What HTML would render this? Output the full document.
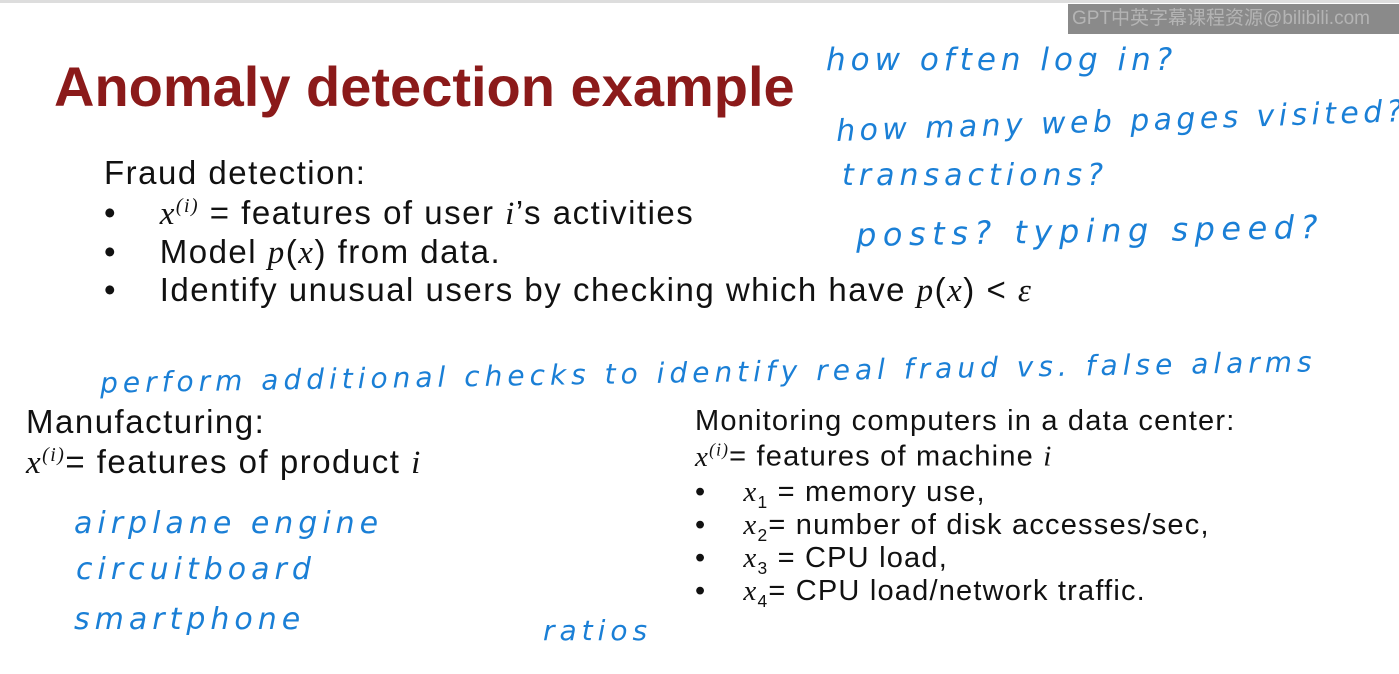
<!DOCTYPE html>
<html><head><meta charset="utf-8"><style>
body{margin:0;width:1399px;height:674px;background:#fff;overflow:hidden;position:relative;font-family:"Liberation Sans",sans-serif;color:#111}
.a{position:absolute;white-space:nowrap}
.t{font-size:33px;letter-spacing:1.5px}
.s{font-size:29px;letter-spacing:1.2px}
.h{color:#1a7fd6;font-family:"DejaVu Sans",sans-serif;font-style:italic;letter-spacing:5px}
i{font-family:"Liberation Serif",serif}
sup,sub{font-size:60%}
</style></head><body>
<div class="a" style="left:0;top:0;width:1399px;height:3px;background:#ddd"></div>
<div class="a" style="left:1068px;top:4px;width:331px;height:30px;background:#8a8a8a;color:#b4b4b4;font-size:19px;line-height:30px;padding-left:4px;font-family:'Liberation Sans','Noto Sans CJK SC',sans-serif">GPT中英字幕课程资源@bilibili.com</div>
<div class="a" style="left:54px;top:54px;font-size:56px;font-weight:bold;color:#8b1a1a">Anomaly detection example</div>
<div class="a t" style="left:104px;top:154px">Fraud detection:</div>
<div class="a t" style="left:104px;top:194px">•&nbsp;&nbsp;&nbsp;&nbsp;<i>x<sup>(i)</sup></i> = features of user <i>i</i>’s activities</div>
<div class="a t" style="left:104px;top:233px">•&nbsp;&nbsp;&nbsp;&nbsp;Model <i>p</i>(<i>x</i>) from data.</div>
<div class="a t" style="left:104px;top:271px">•&nbsp;&nbsp;&nbsp;&nbsp;Identify unusual users by checking which have <i>p</i>(<i>x</i>) &lt; <i>ε</i></div>
<div class="a t" style="left:26px;top:403px">Manufacturing:</div>
<div class="a t" style="left:26px;top:443px"><i>x<sup>(i)</sup></i>= features of product <i>i</i></div>
<div class="a s" style="left:695px;top:405px">Monitoring computers in a data center:</div>
<div class="a s" style="left:695px;top:439px"><i>x<sup>(i)</sup></i>= features of machine <i>i</i></div>
<div class="a s" style="left:695px;top:476px">•&nbsp;&nbsp;&nbsp;&nbsp;<i>x</i><sub>1</sub> = memory use,</div>
<div class="a s" style="left:695px;top:509px">•&nbsp;&nbsp;&nbsp;&nbsp;<i>x</i><sub>2</sub>= number of disk accesses/sec,</div>
<div class="a s" style="left:695px;top:542px">•&nbsp;&nbsp;&nbsp;&nbsp;<i>x</i><sub>3</sub> = CPU load,</div>
<div class="a s" style="left:695px;top:575px">•&nbsp;&nbsp;&nbsp;&nbsp;<i>x</i><sub>4</sub>= CPU load/network traffic.</div>
<div class="a h" style="left:826px;top:42px;font-size:31px">how often log in?</div>
<div class="a h" style="left:836px;top:104px;font-size:30px;letter-spacing:4.4px;transform:rotate(-2deg)">how many web pages visited?</div>
<div class="a h" style="left:842px;top:158px;font-size:30px">transactions?</div>
<div class="a h" style="left:856px;top:212px;font-size:32px;letter-spacing:6.5px;transform:rotate(-1deg)">posts? typing speed?</div>
<div class="a h" style="left:100px;top:356px;font-size:28px;transform:rotate(-1deg)">perform additional checks to identify real fraud vs. false alarms</div>
<div class="a h" style="left:74px;top:506px;font-size:30px">airplane engine</div>
<div class="a h" style="left:76px;top:552px;font-size:30px">circuitboard</div>
<div class="a h" style="left:74px;top:602px;font-size:30px">smartphone</div>
<div class="a h" style="left:543px;top:614px;font-size:28px">ratios</div>
</body></html>
